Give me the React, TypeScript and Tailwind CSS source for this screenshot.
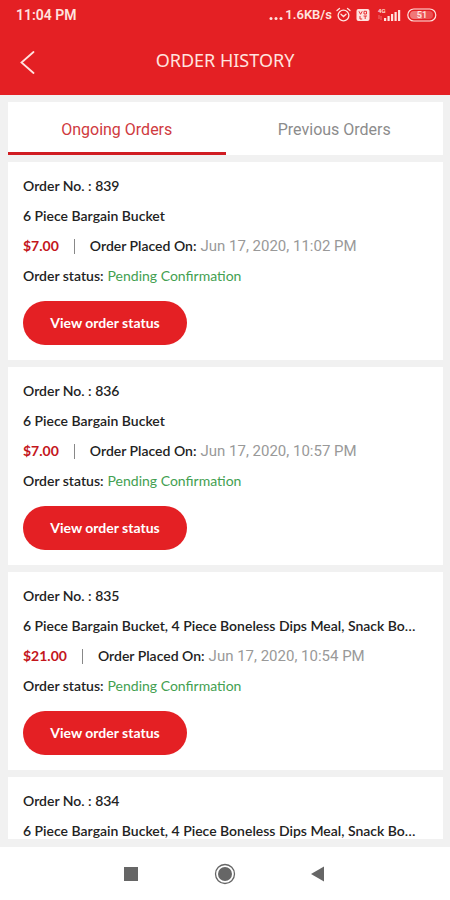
import { useState } from 'react';

interface Order {
  id: number;
  items: string;
  price: string;
  placedOn: string;
  status: string;
}

const LONG_ITEMS = '6 Piece Bargain Bucket, 4 Piece Boneless Dips Meal, Snack Bo…';

const ORDERS: Order[] = [
  { id: 839, items: '6 Piece Bargain Bucket', price: '$7.00', placedOn: 'Jun 17, 2020, 11:02 PM', status: 'Pending Confirmation' },
  { id: 836, items: '6 Piece Bargain Bucket', price: '$7.00', placedOn: 'Jun 17, 2020, 10:57 PM', status: 'Pending Confirmation' },
  { id: 835, items: LONG_ITEMS, price: '$21.00', placedOn: 'Jun 17, 2020, 10:54 PM', status: 'Pending Confirmation' },
  { id: 834, items: LONG_ITEMS, price: '$21.00', placedOn: 'Jun 17, 2020, 10:51 PM', status: 'Pending Confirmation' },
];

const TABS = ['Ongoing Orders', 'Previous Orders'];

function StatusBar() {
  return (
    <div className="flex h-[30px] items-center justify-between pr-[13px] pl-4 font-[Roboto,sans-serif] text-sm font-semibold text-[#ffe3df]">
      <span>11:04 PM</span>
      <div className="flex items-center">
        <svg width="16" height="14" viewBox="0 0 16 14" fill="currentColor">
          <circle cx="2" cy="10.500" r="1.500" />
          <circle cx="7" cy="10.500" r="1.500" />
          <circle cx="12" cy="10.500" r="1.500" />
        </svg>
        <span className="text-[13px]">1.6KB/s</span>
        {/* Alarm */}
        <svg className="ml-1" width="15" height="16" viewBox="0 0 15 16" fill="none" stroke="currentColor" strokeWidth="1.300" strokeLinecap="round">
          <circle cx="7.500" cy="8.500" r="5.400" />
          <path d="M1 3.500 3.500 1.500M14 3.500 11.500 1.500M5 7.200l2.500 2.300L10 7.200" />
        </svg>
        {/* VoLTE */}
        <svg className="ml-[5px]" width="14" height="14" viewBox="0 0 14 14">
          <rect x="0.500" y="1" width="13" height="12" rx="2" fill="currentColor" />
          <path d="M3 3.300l1.600 3 1.600-3M8 3.300h2.500v2.700H8zM4 8v3h2.200M7.500 8h3.500M9.200 8v3" fill="none" stroke="#e42024" strokeWidth="0.900" />
        </svg>
        {/* Signal */}
        <svg className="ml-1.5" width="25" height="16" viewBox="0 0 25 16" fill="currentColor">
          <text x="2" y="6" fontSize="6" fontFamily="Roboto, sans-serif">4G</text>
          <path d="M3 8v4M5 13V9" stroke="currentColor" strokeWidth="0.800" opacity="0.500" />
          <rect x="8" y="11" width="2.200" height="3" />
          <rect x="11.500" y="9" width="2.200" height="5" />
          <rect x="15" y="7" width="2.200" height="7" />
          <rect x="18.500" y="5" width="2.200" height="9" />
          <rect x="22" y="3" width="2.200" height="11" />
        </svg>
        {/* Battery */}
        <svg className="ml-1.5" width="30" height="14" viewBox="0 0 30 14">
          <rect x="0.800" y="1" width="28" height="12" rx="6" fill="none" stroke="currentColor" strokeWidth="1.200" />
          <path d="M7 3h8v8H7a4 4 0 0 1 0-8z" fill="currentColor" opacity="0.450" />
          <path d="M15 3h7a4 4 0 0 1 0 8h-7z" fill="currentColor" opacity="0.250" />
          <text x="15" y="10.200" textAnchor="middle" fontSize="9" fill="currentColor" fontFamily="Roboto, sans-serif">51</text>
        </svg>
      </div>
    </div>
  );
}

function OrderCard({ order }: { order: Order }) {
  return (
    <article className="shrink-0 bg-white px-[15px] pt-[9px] pb-[15px] text-sm leading-[30px] font-semibold text-[#222]">
      <h2>Order No. : {order.id}</h2>
      <p className="truncate">{order.items}</p>
      <div className="flex items-center">
        <span className="font-bold text-[#c4161c]">{order.price}</span>
        <span className="mx-[15px] h-[15px] w-px bg-[#888]" />
        <span>Order Placed On:</span>
        <time className="ml-1 font-[Roboto,sans-serif] text-[15px] font-normal text-[#999]">{order.placedOn}</time>
      </div>
      <p className="flex gap-1">
        Order status: <span className="font-normal text-[#43a051]">{order.status}</span>
      </p>
      <button type="button" className="mt-2.5 block h-11 w-[164px] rounded-full bg-[#e42024] font-bold text-white">
        View order status
      </button>
    </article>
  );
}

export default function App() {
  const [activeTab, setActiveTab] = useState(TABS[0]);

  return (
    <div className="flex h-screen flex-col overflow-hidden bg-[#f1f1f1] font-[Lato,sans-serif]">
      <header className="shrink-0 bg-[#e42024]">
        <StatusBar />
        <div className="grid h-[65px] grid-cols-[56px_1fr_56px] items-center pb-1.5">
          <button type="button" aria-label="Back" className="pt-1 pl-5 text-[#ffe3df]">
            <svg width="16" height="24" viewBox="0 0 16 24" fill="none" stroke="currentColor" strokeWidth="1.800" strokeLinecap="round">
              <path d="M13.500 2 1.500 12.500l12 10.500" />
            </svg>
          </button>
          <h1 className="text-center font-['Noto_Sans',sans-serif] text-lg text-[#ffe3df]">ORDER HISTORY</h1>
        </div>
      </header>

      <main className="mb-2 flex min-h-0 flex-1 flex-col gap-[7px] overflow-y-auto pt-[7px] pr-[7px] pl-2 [scrollbar-width:none]">
        <nav className="grid h-[53px] shrink-0 grid-cols-2 bg-white font-[Roboto,sans-serif] text-base">
          {TABS.map((tab) => (
            <button
              key={tab}
              type="button"
              onClick={() => setActiveTab(tab)}
              className={`border-b-3 pt-1.5 ${tab === activeTab ? 'border-[#d01c22] text-[#cf3a40]' : 'border-transparent text-[#8c8c8c]'}`}
            >
              {tab}
            </button>
          ))}
        </nav>
        {ORDERS.map((order) => (
          <OrderCard key={order.id} order={order} />
        ))}
      </main>

      {/* System navigation */}
      <footer className="flex h-[53px] shrink-0 items-center justify-center gap-[70px] bg-white text-[#666]">
        <button type="button" aria-label="Recent apps">
          <svg width="24" height="24" viewBox="0 0 24 24" fill="currentColor">
            <rect x="5" y="5" width="14" height="14" />
          </svg>
        </button>
        <button type="button" aria-label="Home">
          <svg width="24" height="24" viewBox="0 0 24 24" fill="currentColor">
            <circle cx="12" cy="12" r="9.500" fill="none" stroke="currentColor" strokeWidth="1.300" />
            <circle cx="12" cy="12" r="7" />
          </svg>
        </button>
        <button type="button" aria-label="Back to previous screen">
          <svg width="24" height="24" viewBox="0 0 24 24" fill="currentColor">
            <path d="M4 12 17 4.500v15z" />
          </svg>
        </button>
      </footer>
    </div>
  );
}
